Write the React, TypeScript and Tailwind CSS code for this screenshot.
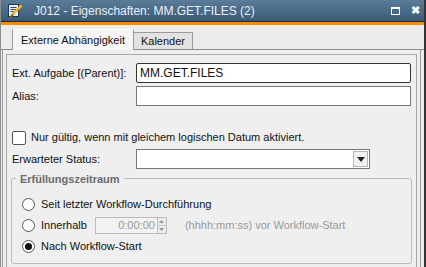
import React from 'react';

// Eigenschaften-Dialog (Externe Abhängigkeit)
function TitleIcon() {
  return (
    <svg width="16" height="16" viewBox="0 0 16 16">
      <rect x="1.5" y="1.5" width="10" height="12" fill="#e8eef6" stroke="#1f3550" />
      <path d="M3.5 4.5h6M3.5 6.5h6M3.5 8.5h4" stroke="#2a4a74" strokeWidth="1" />
      <path d="M14.5 2.5L6 11" stroke="#f2b21b" strokeWidth="2.5" />
      <path d="M6 11l-2.5 3.5" stroke="#8a5a10" strokeWidth="2" />
    </svg>
  );
}

function Radio({ checked }: { checked?: boolean }) {
  return (
    <span className="w-[13px] h-[13px] rounded-full border border-[#555] bg-white flex items-center justify-center shrink-0">
      {checked && <span className="w-[7px] h-[7px] rounded-full bg-[#111]" />}
    </span>
  );
}

export default function App() {
  return (
    <div
      className="w-[426px] h-[267px] overflow-hidden bg-[#ececec] flex flex-col border-l border-r-2 border-l-[#8c8c8c] border-r-[#333] text-[11px] text-[#111]"
      style={{ fontFamily: '"Liberation Sans", Arial, sans-serif' }}
    >
      {/* Titelleiste */}
      <div className="shrink-0 h-[21px] bg-gradient-to-b from-[#5b7c99] to-[#3a5b78] flex items-center pl-[6px] text-[#e9eff5] text-[12px]">
        <TitleIcon />
        <span className="ml-[11px]">J012 - Eigenschaften: MM.GET.FILES (2)</span>
        <div className="ml-auto flex items-center gap-[11px] pr-[4px]">
          <span className="w-[9px] h-[8px] border border-white border-t-[2px]" />
          <span className="text-white text-[11px] font-bold leading-none">✖</span>
        </div>
      </div>
      <div className="shrink-0 h-px bg-[#1b2a38]" />
      <div className="shrink-0 h-[3px] bg-[#ff8c00]" />

      {/* Tabs */}
      <div className="shrink-0 h-[25px] flex items-end pl-[11px] border-b border-[#8a8a8a]">
        <div className="h-[21px] px-[8px] flex items-center bg-[#f5f5f5] border border-b-0 border-[#9a9a9a] border-t-white -mb-px">
          Externe Abhängigkeit
        </div>
        <div className="h-[17px] px-[7px] flex items-center bg-[#e3e3e3] border border-b-0 border-l-0 border-[#9a9a9a]">
          Kalender
        </div>
      </div>

      {/* Seite */}
      <div className="flex-1 min-h-0 overflow-hidden ml-[1px] mr-[3px] border-l border-r border-[#9a9a9a] bg-[#eeeeee] pt-[4px] px-[3px]">
        <div className="h-full border border-b-0 border-[#a8a8a8] bg-[#efefef] px-[5px] pt-[8px]">
          <div className="flex items-center h-[20px]">
            <span className="w-[124px]">Ext. Aufgabe [(Parent)]:</span>
            <div className="flex-1 h-[20px] bg-white border border-[#333] rounded-[2px] flex items-center px-[3px] text-[12px]">
              MM.GET.FILES
            </div>
          </div>
          <div className="flex items-center h-[20px] mt-[3px]">
            <span className="w-[124px]">Alias:</span>
            <div className="flex-1 h-[20px] bg-white border border-[#777]" />
          </div>

          <div className="flex items-center mt-[24px] h-[15px]">
            <span className="w-[14px] h-[14px] border border-[#555] rounded-[2px] bg-white mr-[5px]" />
            <span>Nur gültig, wenn mit gleichem logischen Datum aktiviert.</span>
          </div>
          <div className="flex items-center mt-[4px] h-[20px]">
            <span className="w-[124px]">Erwarteter Status:</span>
            <div className="w-[234px] h-[20px] bg-white border border-[#777] flex justify-end p-[1px]">
              <span className="w-[15px] h-full border border-[#b5b5b5] bg-[#f0f0f0] flex items-center justify-center">
                <svg width="8" height="5" viewBox="0 0 8 5">
                  <path d="M0 0h8L4 5z" fill="#222" />
                </svg>
              </span>
            </div>
          </div>

          {/* Erfüllungszeitraum */}
          <div className="relative mt-[9px] mx-[-1px] border border-[#bbb] rounded-[3px] pt-[15px] pl-[10px] h-[86px]">
            <span className="absolute -top-[8px] left-[4px] bg-[#efefef] px-[4px] font-bold text-[#6b6b6b]">
              Erfüllungszeitraum
            </span>
            <div className="flex items-center h-[20px] gap-[6px]">
              <Radio />
              <span>Seit letzter Workflow-Durchführung</span>
            </div>
            <div className="flex items-center h-[20px] mt-[1px] gap-[6px]">
              <Radio />
              <span>Innerhalb</span>
              <div className="ml-[2px] flex h-[17px]">
                <div className="w-[63px] border border-[#bbb] bg-[#f2f2f2] flex items-center justify-end pr-[2px] text-[#999]">
                  0:00:00
                </div>
                <div className="w-[9px] flex flex-col border border-l-0 border-[#bbb]">
                  <span className="flex-1 flex items-center justify-center bg-[#ececec] border-b border-[#ccc]">
                    <svg width="5" height="3" viewBox="0 0 5 3"><path d="M0 3h5L2.5 0z" fill="#999" /></svg>
                  </span>
                  <span className="flex-1 flex items-center justify-center bg-[#ececec]">
                    <svg width="5" height="3" viewBox="0 0 5 3"><path d="M0 0h5L2.5 3z" fill="#999" /></svg>
                  </span>
                </div>
              </div>
              <span className="ml-[12px] text-[#999]">(hhhh:mm:ss) vor Workflow-Start</span>
            </div>
            <div className="flex items-center h-[20px] mt-[1px] gap-[6px]">
              <Radio checked />
              <span>Nach Workflow-Start</span>
            </div>
          </div>
        </div>
      </div>
    </div>
  );
}
